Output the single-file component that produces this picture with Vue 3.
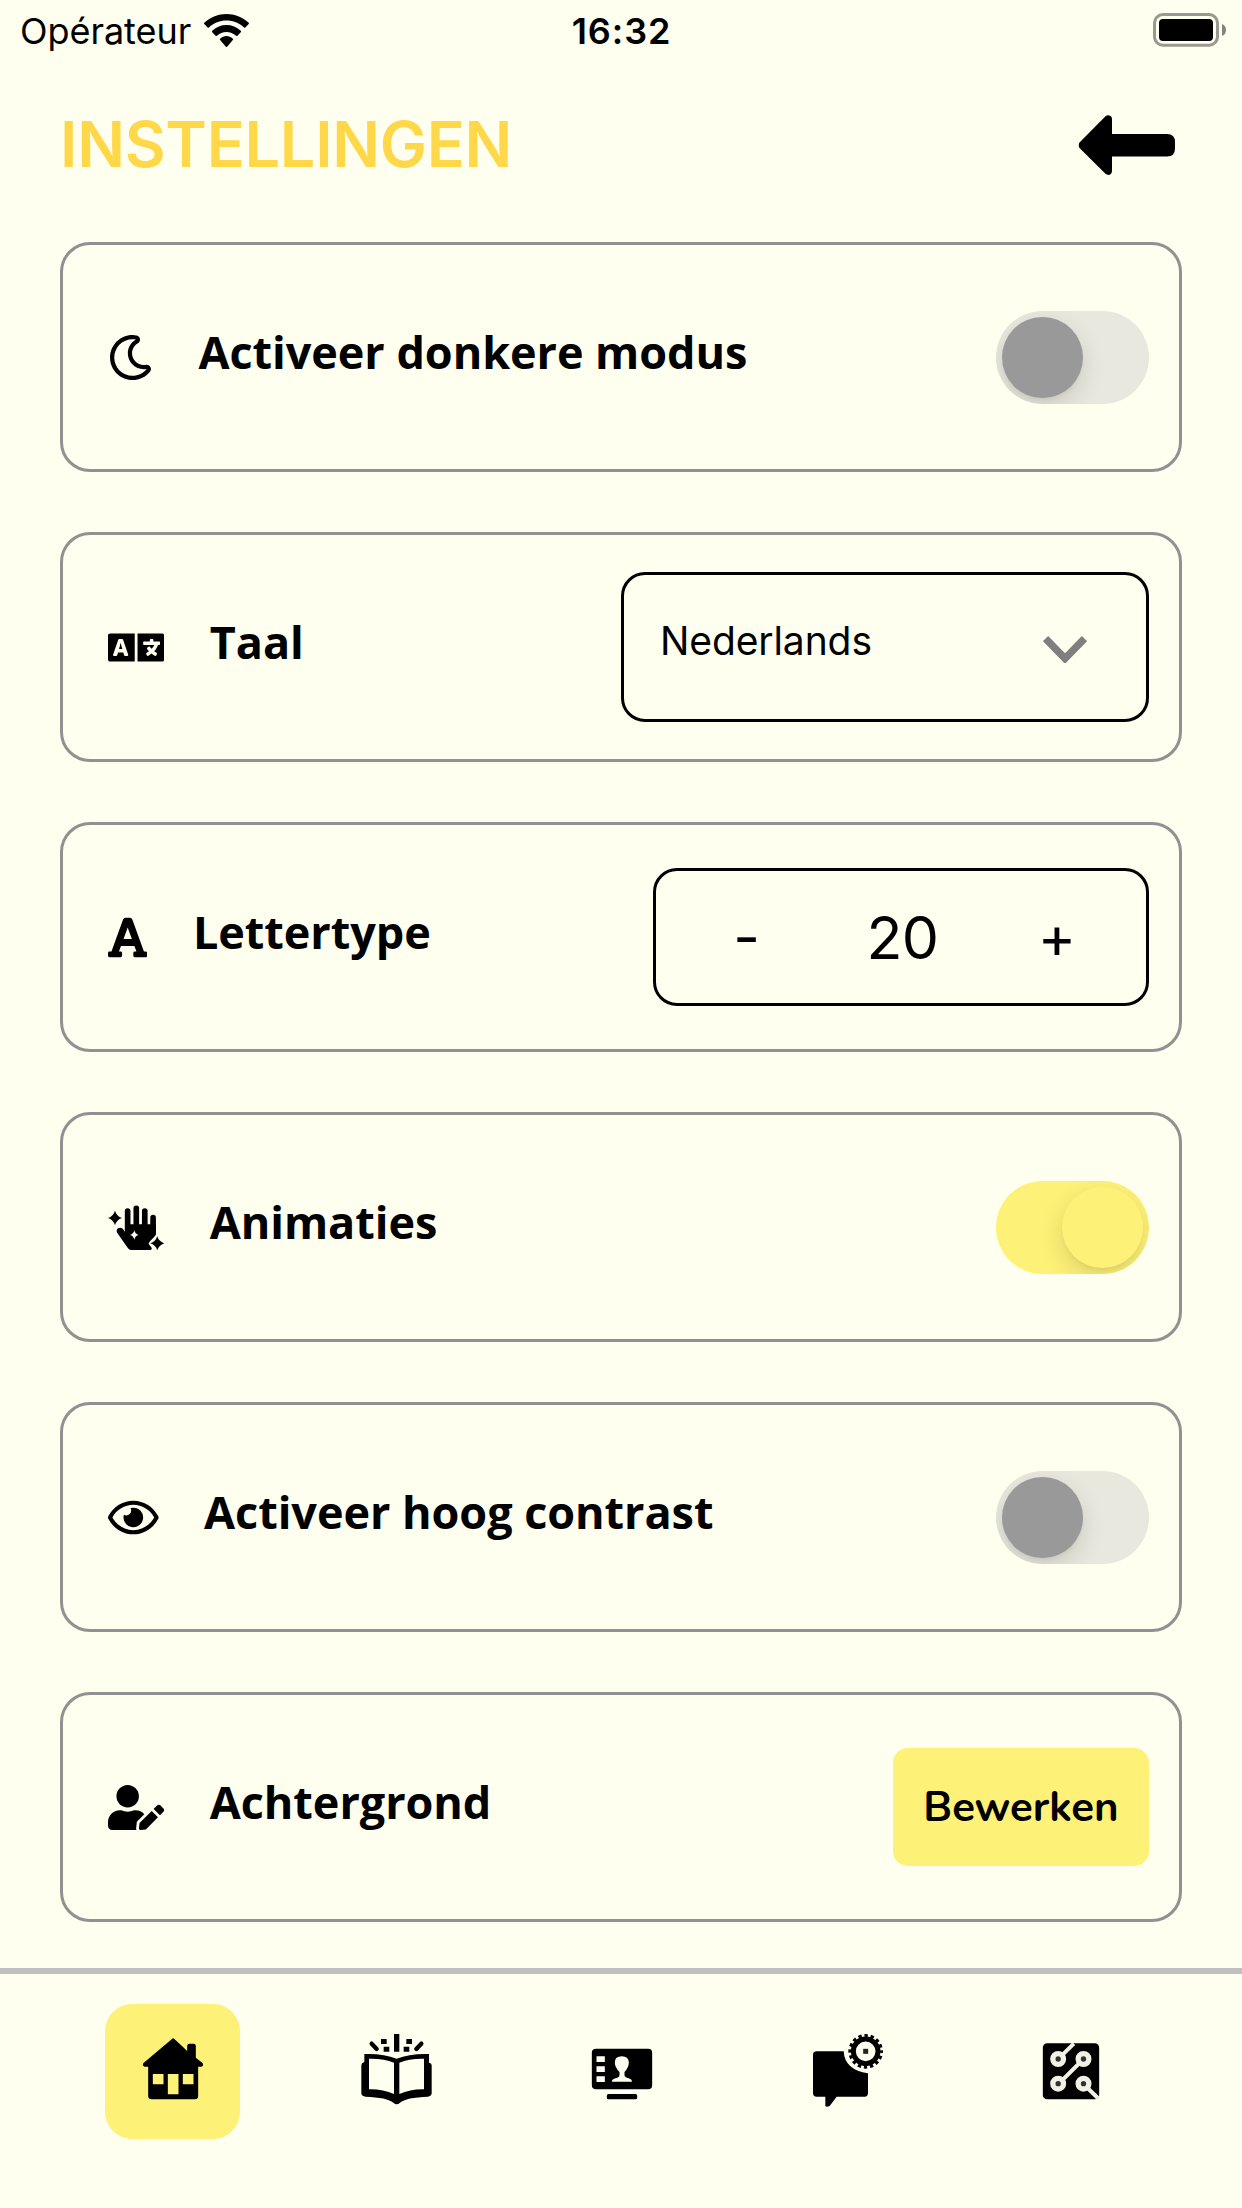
<script setup>
import { ref } from 'vue'

const darkMode = ref(false)
const animations = ref(true)
const contrast = ref(false)
const fontSize = ref(20)
const active = ref('home')
</script>

<template>
  <div class="screen">
    <div class="status">
      <div class="carrier">
        <span class="carrier-name">Opérateur</span>
        <svg class="wifi" viewBox="0 0 17.15 12.33" preserveAspectRatio="none">
          <path d="M8.5713 2.46628C11.0584 2.46639 13.4504 3.38847 15.2529 5.04195C15.3887 5.1696 15.6056 5.16799 15.7393 5.03834L17.0368 3.77487C17.1045 3.70911 17.1422 3.62004 17.1417 3.52735C17.1411 3.43467 17.1023 3.34603 17.0338 3.28104C12.3028 -1.09368 4.83907 -1.09368 0.108056 3.28104C0.0395 3.34598 0 3.4346 0 3.52728C0 3.61996 0.037 3.70906 0.1047 3.77487L1.40255 5.03834C1.53615 5.16819 1.75327 5.1698 1.88893 5.04195C3.69167 3.38836 6.08395 2.46628 8.5713 2.46628ZM8.56795 6.68656C9.92527 6.68647 11.2341 7.19821 12.2403 8.12234C12.3763 8.25347 12.5907 8.25063 12.7234 8.11594L14.0106 6.79676C14.0784 6.72756 14.116 6.6337 14.115 6.53613C14.1141 6.43856 14.0746 6.34547 14.0054 6.27757C10.9416 3.38672 6.19688 3.38672 3.13305 6.27757C3.06384 6.34547 3.02435 6.4386 3.02345 6.53621C3.02254 6.63382 3.0603 6.72767 3.12823 6.79676L4.41513 8.11594C4.54778 8.25063 4.76215 8.25347 4.89823 8.12234C5.90368 7.19882 7.21152 6.68713 8.56795 6.68656ZM11.0924 9.48011C11.0943 9.58546 11.0572 9.68703 10.9899 9.76084L8.81327 12.2156C8.74946 12.2877 8.66247 12.3283 8.5717 12.3283C8.48093 12.3283 8.39394 12.2877 8.33013 12.2156L6.15314 9.76084C6.08585 9.68697 6.04884 9.58537 6.05083 9.48002C6.05282 9.37467 6.09364 9.27491 6.16364 9.20429C7.55374 7.89067 9.58966 7.89067 10.9798 9.20429C11.0497 9.27497 11.0905 9.37476 11.0924 9.48011Z" />
        </svg>
      </div>
      <div class="time">16:32</div>
      <div class="power">
        <svg width="73" height="34" viewBox="0 0 73 34">
          <rect x="1.5" y="1.5" width="63" height="30.7" rx="8.5" fill="none" stroke="#999990" stroke-width="3" />
          <rect x="6" y="6" width="54" height="22" rx="4" />
          <path d="M69 11a6.5 6.5 0 0 1 0 12z" fill="#85857d" />
        </svg>
      </div>
    </div>

    <header class="header">
      <h1 class="title">INSTELLINGEN</h1>
      <svg class="back" width="97" height="60" viewBox="0 0 97 60">
        <path d="M1.500 27.500 27.500 1.200Q30-.8 32.600 1Q34 2 34 4V19H89Q97 19 97 27V33.500Q97 41.500 89 41.500H34V56Q34 58 32.600 59.200Q30 60.800 27.500 58.800L1.500 33Q0 30.200 1.500 27.500z" />
      </svg>
    </header>

    <main class="list">
      <section class="card">
        <svg class="icon" width="45" height="45" viewBox="0 0 512 512">
          <path d="M279.135 512c78.756 0 150.982-35.804 198.844-94.775 28.27-34.831-2.558-85.722-46.249-77.401-82.348 15.683-158.272-47.268-158.272-130.792 0-48.424 26.06-92.292 67.434-115.836 38.745-22.05 28.999-80.788-15.022-88.919A257.936 257.936 0 0 0 279.135 0c-141.36 0-256 114.575-256 256 0 141.36 114.576 256 256 256zm0-464c12.985 0 25.689 1.201 38.016 3.478-54.76 31.163-91.693 90.042-91.693 157.554 0 113.848 103.641 199.2 215.252 177.944C402.574 433.964 344.366 464 279.135 464c-114.875 0-208-93.125-208-208s93.125-208 208-208z" />
        </svg>
        <span class="label">Activeer donkere modus</span>
        <div class="toggle" :class="{ on: darkMode }" @click="darkMode = !darkMode"><i class="knob"></i></div>
      </section>

      <section class="card">
        <svg class="icon" width="56.25" height="45" viewBox="0 0 640 512">
          <path d="M152.1 236.2c-3.5-12.1-7.8-33.2-7.8-33.2h-.5s-4.3 21.1-7.8 33.2l-11.1 37.5H163zM616 96H336v320h280c13.3 0 24-10.7 24-24V120c0-13.3-10.7-24-24-24zm-24 120c0 6.6-5.4 12-12 12h-11.4c-6.9 23.6-21.7 47.4-42.7 69.9 8.4 6.4 17.1 12.5 26.1 18 5.5 3.4 7.3 10.5 4.1 16.2l-7.9 13.9c-3.4 5.9-10.9 7.8-16.7 4.3-12.6-7.8-24.5-16.1-35.4-24.9-10.9 8.7-22.7 17.1-35.4 24.9-5.8 3.5-13.3 1.6-16.7-4.3l-7.9-13.9c-3.2-5.6-1.4-12.8 4.2-16.2 9.3-5.7 18-11.7 26.1-18-7.9-8.4-14.9-17-21-25.7-4-5.7-2.2-13.6 3.7-17.1l6.5-3.9 7.3-4.3c5.4-3.2 12.4-1.7 16 3.4 5 7 10.8 14 17.4 20.9 13.500-14.2 23.8-28.9 30-43.2H412c-6.600 0-12-5.400-12-12v-16c0-6.600 5.400-12 12-12h64v-16c0-6.600 5.400-12 12-12h16c6.600 0 12 5.400 12 12v16h64c6.600 0 12 5.400 12 12zM0 120v272c0 13.300 10.700 24 24 24h280V96H24c-13.300 0-24 10.700-24 24zm58.900 216.100L116.400 167c1.700-4.900 6.200-8.100 11.400-8.100h32.500c5.100 0 9.700 3.300 11.400 8.100l57.500 169.100c2.600 7.800-3.100 15.900-11.400 15.900h-22.900a12 12 0 0 1-11.500-8.600l-9.400-31.900h-60.200l-9.100 31.800c-1.500 5.100-6.200 8.700-11.500 8.700H70.300c-8.200 0-14-8.100-11.400-15.900z" />
        </svg>
        <span class="label">Taal</span>
        <div class="select">
          <span class="select-value">Nederlands</span>
          <svg class="chevron" width="44" height="28" viewBox="0 0 44 28">
            <path d="M2.500 3.500 22 23.500 41.500 3.500" fill="none" stroke="#7f7f7f" stroke-width="7.500" />
          </svg>
        </div>
      </section>

      <section class="card">
        <svg class="icon" width="39.4" height="45" viewBox="0 0 448 512">
          <path d="M432 416h-23.410L277.880 53.690A32 32 0 0 0 247.580 32h-47.160a32 32 0 0 0-30.300 21.690L39.410 416H16a16 16 0 0 0-16 16v32a16 16 0 0 0 16 16h128a16 16 0 0 0 16-16v-32a16 16 0 0 0-16-16h-19.580l23.300-64h152.560l23.300 64H304a16 16 0 0 0-16 16v32a16 16 0 0 0 16 16h128a16 16 0 0 0 16-16v-32a16 16 0 0 0-16-16zM176.850 272L224 142.510 271.150 272z" />
        </svg>
        <span class="label">Lettertype</span>
        <div class="stepper">
          <button class="step" @click="fontSize--">-</button>
          <span class="count">{{ fontSize }}</span>
          <button class="step" @click="fontSize++">+</button>
        </div>
      </section>

      <section class="card">
        <svg class="icon" width="56.25" height="45" viewBox="174 136 169 135">
          <g stroke="#000" stroke-width="17" stroke-linecap="round">
            <path d="M233 154V210M259 146V210M284.500 154V210M309.500 174V210" />
          </g>
          <path d="M225 194H318V226L301 244 296 252 306 266 303 271H243Q238 271 234 266L202 220Q197 211 204 206Q212 201 219 208L225 216z" />
          <path class="paper-fill" d="M253 212Q255.500 223.500 266 226 255.500 228.500 253 240 250.500 228.500 240 226 250.500 223.500 253 212z" />
          <path class="paper-edge" d="M322 230Q326 247 343 251 326 255 322 272 318 255 301 251 318 247 322 230z" />
          <path d="M322 230Q327 246 343 251 327 256 322 272 317 256 301 251 317 246 322 230zM195 153Q200 170 216 175 200 180 195 197 190 180 174 175 190 170 195 153z" />
        </svg>
        <span class="label">Animaties</span>
        <div class="toggle" :class="{ on: animations }" @click="animations = !animations"><i class="knob"></i></div>
      </section>

      <section class="card">
        <svg class="icon" width="50.6" height="45" viewBox="0 0 576 512">
          <path d="M288 144a110.940 110.940 0 0 0-31.240 5 55.400 55.400 0 0 1 7.240 27 56 56 0 0 1-56 56 55.400 55.400 0 0 1-27-7.240A111.710 111.710 0 1 0 288 144zm284.520 97.400C518.290 135.590 410.930 64 288 64S57.680 135.640 3.480 241.410a32.350 32.350 0 0 0 0 29.190C57.710 376.410 165.070 448 288 448s230.320-71.640 284.520-177.410a32.350 32.350 0 0 0 0-29.190zM288 400c-98.650 0-189.090-55-237.930-144C98.910 167 189.340 112 288 112s189.090 55 237.930 144C477.100 345 386.660 400 288 400z" />
        </svg>
        <span class="label">Activeer hoog contrast</span>
        <div class="toggle" :class="{ on: contrast }" @click="contrast = !contrast"><i class="knob"></i></div>
      </section>

      <section class="card">
        <svg class="icon" width="56.25" height="45" viewBox="0 0 640 512">
          <path d="M224 256c70.700 0 128-57.300 128-128S294.700 0 224 0 96 57.300 96 128s57.300 128 128 128zm89.600 32h-16.700c-22.200 10.200-46.900 16-72.900 16s-50.600-5.800-72.900-16h-16.700C60.200 288 0 348.200 0 422.400V464c0 26.500 21.500 48 48 48h274.900c-2.400-6.800-3.400-14-2.600-21.300l6.800-60.900 1.200-11.100 7.900-7.900 77.300-77.300c-24.500-27.700-60-45.500-99.900-45.500zm45.300 145.300l-6.800 61c-1.100 10.200 7.500 18.800 17.600 17.600l60.900-6.800 137.900-137.900-71.700-71.700-137.900 137.800zM633 268.900L595.100 231c-9.300-9.300-24.500-9.300-33.800 0l-37.800 37.800-4.100 4.100 71.800 71.700 41.800-41.800c9.300-9.400 9.300-24.500 0-33.900z" />
        </svg>
        <span class="label">Achtergrond</span>
        <button class="edit">Bewerken</button>
      </section>
    </main>

    <nav class="nav">
      <button class="tab" :class="{ active: active === 'home' }" @click="active = 'home'">
        <svg viewBox="43.5 42 405 405">
          <path fill-rule="evenodd" d="M248 145Q252 147 290 183V168Q290 161 297 161H310Q316 161 316 168V203L336 219Q341 228 332 230H323V318Q323 328 313 328H184Q173 328 173 318V230H162Q154 226 159 219L240 151Q245 146 248 145zM187 252V283H219V252zM232 252V313H264V252zM277 252V283H309V252z" />
        </svg>
      </button>
      <button class="tab" :class="{ active: active === 'library' }" @click="active = 'library'">
        <svg viewBox="717 42 405 405">
          <path fill-rule="evenodd" d="M823 192Q880 190 920 206Q960 190 1017 192V218Q1025 219 1025 226V312Q1023 319 1014 320Q948 322 930 338Q920 347 910 338Q892 322 826 320Q816 319 814 312V226Q814 219 823 216zM837 206V298Q878 297 912 312V218Q882 205 837 206zM1002 206Q958 205 928 218V312Q962 297 1002 298z" />
          <path d="M912 132H928V185H912zM873 147H890V162H873zM881 170H898V185H881zM949 147H966V162H949zM941 170H958V185H941z" />
          <path d="M845 161 860 177M994 161 979 177" stroke="#000" stroke-width="13" stroke-linecap="round" />
        </svg>
      </button>
      <button class="tab" :class="{ active: active === 'contacts' }" @click="active = 'contacts'">
        <svg viewBox="-19.5 -18 405 405">
          <path fill-rule="evenodd" d="M107 116H263Q275 116 275 128V226Q275 238 263 238H107Q94 238 94 226V128Q94 116 107 116zM108 139V156H133V139zM108 169V186H133V169zM108 199V216H133V199zM154 215H215Q214 207 205 205 192 202 192 196V186Q205 173 205 157 204 139 184 139 163 139 163 157 163 173 177 186V196Q177 202 165 205 155 207 154 215z" />
          <rect x="139" y="252" width="91" height="16" rx="5" />
        </svg>
      </button>
      <button class="tab" :class="{ active: active === 'chat' }" @click="active = 'chat'">
        <svg viewBox="654 -18 405 405">
          <path d="M770 124H851Q854 180 924 190V249Q924 260 914 260H830L809 288Q800 292 796 288V260H770Q759 260 759 249V135Q759 124 770 124z" />
          <circle cx="917" cy="124" r="37" fill="none" stroke="#000" stroke-width="15" />
          <circle cx="917" cy="124" r="47" fill="none" stroke="#000" stroke-width="10" stroke-dasharray="10 8.457" stroke-dashoffset="5" />
          <rect x="909.500" y="116.500" width="15" height="15" fill="#222" />
        </svg>
      </button>
      <button class="tab" :class="{ active: active === 'circuit' }" @click="active = 'circuit'">
        <svg viewBox="-52.5 -48 405 405">
          <rect x="67" y="70" width="169" height="168" rx="13" />
          <path class="trace" d="M124 106 160 71M124 182 180 126M198 201 232 234" />
          <g class="trace ring">
            <circle cx="113" cy="117" r="16" />
            <circle cx="189" cy="117" r="16" />
            <circle cx="113" cy="191" r="16" />
            <circle cx="189" cy="191" r="16" />
          </g>
        </svg>
      </button>
    </nav>
  </div>
</template>

<style>
body {
  background: #ffffef;
}
</style>

<style scoped>
.screen {
  --paper: #ffffef;
  --accent: #fef177;
  display: flex;
  flex-direction: column;
  width: 1242px;
  height: 2208px;
  overflow: hidden;
  background: var(--paper);
  color: #000;
  font-family: Inter, "Liberation Sans", sans-serif;
}
svg {
  display: block;
  flex: none;
}
button {
  margin: 0;
  padding: 0;
  border: 0;
  background: none;
  color: inherit;
  font: inherit;
}
.status {
  display: grid;
  grid-template-columns: 1fr auto 1fr;
  align-items: center;
  height: 60px;
  padding: 0 16px 0 20px;
}
.carrier {
  display: flex;
  align-items: center;
}
.carrier-name {
  width: 184px;
  padding-top: 2px;
  font-size: 36px;
  line-height: 58px;
  letter-spacing: -0.05px;
}
.wifi {
  width: 45px;
  height: 33px;
}
.time {
  padding: 2px 3px 0 0;
  font-size: 36px;
  line-height: 58px;
  font-weight: 600;
  letter-spacing: 0.9px;
}
.power {
  display: flex;
  justify-content: flex-end;
}
.header {
  display: flex;
  align-items: center;
  justify-content: space-between;
  height: 170px;
  padding: 0 67px 0 60px;
}
.title {
  margin: 0 0 2px;
  font-size: 63px;
  line-height: 76px;
  font-weight: 600;
  letter-spacing: -0.3px;
  color: #ffd84a;
}
.list {
  display: flex;
  flex-direction: column;
  gap: 60px;
  padding: 12px 60px 46px;
}
.card {
  display: flex;
  align-items: center;
  box-sizing: border-box;
  height: 230px;
  padding: 0 30px 0 45px;
  border: 3px solid #919191;
  border-radius: 30px;
}
.icon {
  margin-top: 1px;
}
.label {
  flex: 1;
  margin-left: 45.5px;
  padding-bottom: 12px;
  font-family: "Open Sans", sans-serif;
  font-size: 45px;
  font-weight: 700;
  letter-spacing: -0.05px;
  white-space: nowrap;
}
.toggle {
  display: flex;
  box-sizing: border-box;
  width: 153px;
  height: 93px;
  padding: 6px;
  border-radius: 47px;
  background: #e8e8de;
  overflow: hidden;
}
.knob {
  width: 81px;
  height: 81px;
  border-radius: 50%;
  background: #999;
  box-shadow: 0 9px 24px rgba(0, 0, 0, 0.13), 0 3px 3px rgba(0, 0, 0, 0.03);
}
.toggle.on {
  justify-content: flex-end;
  background: var(--accent);
}
.toggle.on .knob {
  background: var(--accent);
}
.select {
  display: flex;
  align-items: center;
  justify-content: space-between;
  box-sizing: border-box;
  width: 528px;
  height: 150px;
  padding: 0 59px 0 36px;
  border: 3px solid #000;
  border-radius: 24px;
}
.select-value {
  padding-bottom: 13px;
  font-size: 39px;
  letter-spacing: -0.1px;
}
.chevron {
  margin-top: 4px;
}
.stepper {
  display: grid;
  grid-template-columns: 181px 1fr 178px;
  align-items: center;
  box-sizing: border-box;
  width: 496px;
  height: 138px;
  border: 3px solid #000;
  border-radius: 24px;
  text-align: center;
}
.step {
  font-size: 58px;
}
.count {
  font-size: 59px;
  letter-spacing: -0.5px;
}
.edit {
  width: 256px;
  height: 118px;
  border-radius: 15px;
  background: var(--accent);
  font-family: Nunito, Lato, sans-serif;
  font-size: 42px;
  font-weight: 700;
}
.nav {
  display: flex;
  flex: 1;
  align-items: flex-start;
  justify-content: center;
  gap: 89.5px;
  padding-top: 30px;
  border-top: 6px solid #bfbfbf;
}
.tab {
  width: 135px;
  height: 135px;
  border-radius: 27px;
}
.tab svg {
  width: 135px;
  height: 135px;
}
.tab.active {
  background: var(--accent);
}
.paper-fill {
  fill: var(--paper);
}
.paper-edge {
  fill: var(--paper);
  stroke: var(--paper);
  stroke-width: 12;
}
.trace {
  fill: #333;
  stroke: #f2f2e4;
  stroke-width: 12;
}
.ring {
  stroke-width: 16;
}
</style>
